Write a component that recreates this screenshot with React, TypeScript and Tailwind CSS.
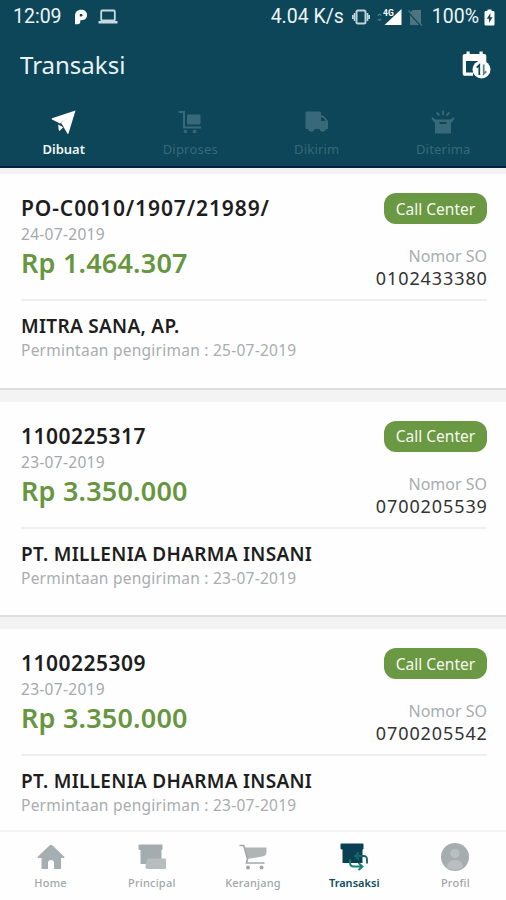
import type { ReactNode } from 'react'

type Order = {
  id: string
  idClass: string
  date: string
  total: string
  so: string
  customer: string
  delivery: string
}

const orders: Order[] = [
  {
    id: 'PO-C0010/1907/21989/',
    idClass: 'tracking-[0.9px]',
    date: '24-07-2019',
    total: 'Rp 1.464.307',
    so: '0102433380',
    customer: 'MITRA SANA, AP.',
    delivery: '25-07-2019',
  },
  {
    id: '1100225317',
    idClass: 'tracking-[0.5px]',
    date: '23-07-2019',
    total: 'Rp 3.350.000',
    so: '0700205539',
    customer: 'PT. MILLENIA DHARMA INSANI',
    delivery: '23-07-2019',
  },
  {
    id: '1100225309',
    idClass: 'tracking-[0.5px]',
    date: '23-07-2019',
    total: 'Rp 3.350.000',
    so: '0700205542',
    customer: 'PT. MILLENIA DHARMA INSANI',
    delivery: '23-07-2019',
  },
]

function StatusBar() {
  return (
    <div className="flex h-8 items-center pt-0.5 pl-[13px] pr-[11px] font-['Roboto',sans-serif] text-[19.5px] leading-8 text-[#eef4f6]">
      <span className="w-[50px] whitespace-nowrap">12:09</span>
      <svg viewBox="0 0 14 16" className="ml-[11px] h-4 w-3.5">
        <path fill="#fff" fillRule="evenodd" d="M1 7C1 3 3.500.8 7 .8c3.800 0 6 2 6 5.200s-2 5.200-5.500 5.200H6.300v1.500c0 1.500-1 2.500-2.500 2.500H1zM5.800 5v2.500h1.500c.9 0 1.300-.5 1.300-1.200S8.200 5 7.300 5z" />
      </svg>
      <svg viewBox="0 0 20 16" className="ml-[10px] h-4 w-5">
        <rect x="3.200" y="1.500" width="13.600" height="10" rx="1" fill="none" stroke="#c9dade" strokeWidth="1.800" />
        <path fill="#c9dade" d="M.5 12h19v2.500H.5z" />
      </svg>
      <span className="ml-auto whitespace-nowrap">4.04 K/s</span>
      <svg viewBox="0 0 18 16" className="ml-2 h-4 w-[18px]" fill="none" stroke="#bfd2d8" strokeWidth="1.600">
        <rect x="4.500" y="1.500" width="9" height="13" rx="1.500" strokeWidth="2" />
        <path d="M2.500 4v8M.8 6v4M15.500 4v8M17.200 6v4" />
      </svg>
      <svg viewBox="0 0 25 18" className="ml-[7px] h-[18px] w-[25px]">
        <path fill="none" stroke="#4f7b89" strokeWidth="1.200" d="M.8 7.500 2.500 6l1.700 1.500M.8 11l1.700 1.500L4.200 11" />
        <path fill="#fff" d="M24.500 1v16h-17z" />
        <text x="6" y="7.500" fontSize="8.500" fontWeight="700" fill="#fff">4G</text>
      </svg>
      <svg viewBox="0 0 15 17" className="ml-[6px] h-[17px] w-[15px]">
        <path fill="#4d7480" d="M5 1h8v14L2 3.500zM2 6l9 10H2z" />
        <path fill="none" stroke="#4d7480" strokeWidth="1.300" d="m.5 1.500 13.500 15" />
      </svg>
      <span className="ml-[9px] whitespace-nowrap">100%</span>
      <svg viewBox="0 0 11 17" className="ml-[5px] h-[17px] w-[11px]">
        <path fill="#fff" d="M3.500.5h4V2H9c1 0 1.500.5 1.500 1.500v11.500c0 1-.5 1.500-1.500 1.500H2C1 16.500.5 16 .5 15V3.500C.5 2.500 1 2 2 2h1.500z" />
        <path fill="#0c4658" d="M6.500 4 2.800 9.700h2.300V14l3.400-5.700H6.200z" />
      </svg>
    </div>
  )
}

function CalendarIcon() {
  return (
    <svg viewBox="0 0 29 28" className="h-7 w-[29px]">
      <path fill="#fff" fillRule="evenodd" d="M4.500.5h3.200V3h9.800V.5h3.200V3H22c1.500 0 2.300.8 2.300 2.300V13h-3.200v-3H4v11.500h7v3.200H3C1.500 24.700.7 24 .7 22.400V5.300C.7 3.800 1.500 3 3 3h1.500z" />
      <circle cx="19.500" cy="18.500" r="9" fill="#fff" />
      <path fill="none" stroke="#0c4658" strokeWidth="1.700" d="M17.300 24V14l-2.600 2.700" />
      <path fill="none" stroke="#5d808b" strokeWidth="1.700" d="M21.700 13.500v9.500l2.600-2.600" />
    </svg>
  )
}

function PlaneIcon() {
  return (
    <svg viewBox="0 0 25 24" className="h-6 w-[25px]">
      <path fill="#fff" d="M24.500.5 17.500 23.500c-.3.600-.8.600-1.200 0L12.500 17 19 6.500 9 13.500 1 9.500c-.6-.4-.6-1 0-1.200z" />
      <path fill="#fff" d="m10 13 9-7.500 1 2-6.500 10.500z" />
      <path fill="#fff" d="m7.200 14.500 5 2.700-3.200 3.300c-.6.500-1.200.3-1.300-.5z" />
    </svg>
  )
}

function TrolleyIcon() {
  return (
    <svg viewBox="0 0 24 24" className="h-6 w-6" fill="#386978">
      <path fill="none" stroke="#386978" strokeWidth="2" d="M.5 2H6v15.500h17" />
      <rect x="9" y="4.500" width="13.500" height="10" rx="1" />
      <circle cx="7.500" cy="21.500" r="1.800" />
      <circle cx="16.500" cy="21.500" r="1.800" />
    </svg>
  )
}

function TruckIcon() {
  return (
    <svg viewBox="0 0 24 24" className="h-6 w-6" fill="#386978">
      <path fillRule="evenodd" d="M2 1.500h12.500c1 0 1.500.5 1.500 1.500v2.500h2.500L23 11v8h-2a3.300 3.300 0 0 1-6.500 0H9.500a3.300 3.300 0 0 1-6.500 0H1.500C.8 19 .5 18.500.5 17.500V3c0-1 .5-1.500 1.500-1.500zm14 6V11h5l-3-3.500z" />
    </svg>
  )
}

function OpenBoxIcon() {
  return (
    <svg viewBox="0 0 24 24" className="h-6 w-6" fill="#386978">
      <path fillRule="evenodd" d="M4.500 9.500h15L22.500 7l1 2-3.500 4v10.500H4V13L.5 9l1-2zM8.500 12v2h7v-2z" />
      <path fill="none" stroke="#386978" strokeWidth="1.800" d="m5.500 2.500 3 3M12 .5V5M18.500 2.500l-3 3" />
    </svg>
  )
}

function HomeIcon() {
  return (
    <svg viewBox="0 0 28 26" className="h-[26px] w-7" fill="#a5afb1">
      <path d="M12.500 1.500c1-1 2-1 3 0L27 12.500c.8.900.5 1.500-.5 1.500H24v11h-7v-6c0-2-1-3-3-3s-3 1-3 3v6H4.500V14H1.500c-1 0-1.200-.6-.5-1.500z" />
    </svg>
  )
}

function StoreIcon() {
  return (
    <svg viewBox="0 0 28 26" className="h-[26px] w-7">
      <path fill="#a3adb0" d="M1.500.5h22c.8 0 1 .5 1 1v3.300c0 .8-.5 1.200-1 1.200v14H2.500V6C1 6 .5 5.500.5 4.500v-3c0-.5.300-1 1-1z" />
      <path fill="#b9bcbc" d="M10 14.500h17c.8 0 1 .5 1 1v8c0 1-.5 1.500-1.500 1.500H9.500c-1.300 0-2-.7-2-2v-1.500l1.500-6c.1-.7.500-1 1-1z" />
    </svg>
  )
}

function CartIcon() {
  return (
    <svg viewBox="0 0 28 26" className="h-[26px] w-7">
      <path fill="#afb4b5" d="M6 3.500h21.500v4c0 3-1.500 4.500-4.500 5L8.500 15z" />
      <path fill="none" stroke="#a3a8a9" strokeWidth="1.700" d="M.5 1.500h4.300L8.500 15l-1 4h18" />
      <circle cx="9" cy="23.500" r="2" fill="#a3a8a9" />
      <circle cx="22.500" cy="23.500" r="2" fill="#a3a8a9" />
    </svg>
  )
}

function TransaksiIcon() {
  return (
    <svg viewBox="0 0 28 28" className="h-7 w-7">
      <path fill="#0b4052" d="M1.500.5h21c.8 0 1 .5 1 1v4c0 .6-.4 1-1 1V20h-20V6.500C1 6.500.5 6 .5 5.500v-4c0-.5.300-1 1-1z" />
      <path fill="none" stroke="#12696f" strokeWidth="1.900" d="M27 20.500v-4c0-2.200-1-3.500-3.500-3.500h-8M19 9.500 15 13l4 3.500" />
      <path fill="none" stroke="#148176" strokeWidth="1.900" d="M10 16.500v3c0 2.500 1.200 4 3.500 4H22M18.500 20l4 3.500-4 3.500" />
    </svg>
  )
}

function ProfilIcon() {
  return (
    <svg viewBox="0 0 28 28" className="h-7 w-7">
      <circle cx="14" cy="14" r="14" fill="#a5adae" />
      <circle cx="14" cy="10.500" r="4.700" fill="#b9bebf" />
      <path fill="#b9bebf" d="M6 24.500c0-5 3-7.500 8-7.500s8 2.500 8 7.500c-4.500 3.200-11.500 3.200-16 0z" />
    </svg>
  )
}

function Tab({ label, icon, active }: { label: string; icon: ReactNode; active?: boolean }) {
  return (
    <div className="flex flex-1 flex-col items-center pl-px">
      {icon}
      <span
        className={
          active
            ? 'mt-[7px] text-[13px] leading-4 font-semibold text-[#f1f6f7]'
            : 'mt-[7px] text-[13px] leading-4 tracking-[0.2px] text-[#386978]'
        }
      >
        {label}
      </span>
    </div>
  )
}

function OrderCard({ order }: { order: Order }) {
  return (
    <div className="h-[215.5px] shrink-0 border-b-2 border-[#dedede] bg-[#fefefe] pl-[21px] pr-[19px]">
      <div className="flex h-[127px] justify-between border-b-2 border-[#efefef] whitespace-nowrap">
        <div className="pt-[20px]">
          <div className={`text-[21px] leading-7 font-semibold text-[#1d1d1d] ${order.idClass}`}>{order.id}</div>
          <div className="text-[15.5px] leading-6 tracking-[0.3px] text-[#a5a9ab]">{order.date}</div>
          <div className="text-[27px] leading-[34px] font-semibold tracking-[0.2px] text-[#679640]">{order.total}</div>
        </div>
        <div className="flex flex-col items-end pt-[19px]">
          <div className="flex h-[31px] w-[103px] items-center justify-center rounded-[12px] bg-[#6b9842] pt-0.5 text-[15.5px] text-[#f5f9ef]">
            Call Center
          </div>
          <div className="mt-[21px] text-[16px] leading-[22px] text-[#a9adaf]">Nomor SO</div>
          <div className="text-[18px] leading-[22px] tracking-[0.9px] text-[#333] -mr-[0.8px]">{order.so}</div>
        </div>
      </div>
      <div className="pt-3 text-[19px] leading-[26px] font-semibold tracking-[0.3px] whitespace-nowrap text-[#1d1d1d]">
        {order.customer}
      </div>
      <div className="text-[15.5px] leading-[22px] tracking-[0.25px] text-[#a9adaf]">
        Permintaan pengiriman : {order.delivery}
      </div>
    </div>
  )
}

function NavItem({ label, icon, active }: { label: string; icon: ReactNode; active?: boolean }) {
  return (
    <div className="flex flex-1 flex-col items-center">
      <div className="flex h-7 items-center">{icon}</div>
      <span
        className={
          active
            ? 'mt-[5px] text-[11px] leading-[14px] font-semibold text-[#0f4c5c]'
            : 'mt-[5px] text-[11px] leading-[14px] font-medium tracking-[0.2px] text-[#a2a7a9]'
        }
      >
        {label}
      </span>
    </div>
  )
}

export default function App() {
  return (
    <div className="flex h-[900px] w-[506px] flex-col overflow-hidden bg-[#f3f3f3] font-['Noto_Sans',sans-serif]">
      <header className="h-[168px] shrink-0 border-b-2 border-[#071f42] bg-[#0c4658]">
        <StatusBar />
        <div className="flex h-[66px] items-center justify-between pl-5 pr-[15px]">
          <h1 className="text-[24px] leading-8 text-[#e9f2f5]">Transaksi</h1>
          <CalendarIcon />
        </div>
        <div className="flex pt-3">
          <Tab label="Dibuat" icon={<PlaneIcon />} active />
          <Tab label="Diproses" icon={<TrolleyIcon />} />
          <Tab label="Dikirim" icon={<TruckIcon />} />
          <Tab label="Diterima" icon={<OpenBoxIcon />} />
        </div>
      </header>

      <main className="flex min-h-0 flex-1 flex-col gap-3 overflow-hidden pt-[6px]">
        {orders.map((order) => (
          <OrderCard key={order.id} order={order} />
        ))}
      </main>

      <nav className="flex h-[70px] shrink-0 border-t-2 border-[#f5f5f5] bg-[#fefefe] pt-[11px]">
        <NavItem label="Home" icon={<HomeIcon />} />
        <NavItem label="Principal" icon={<StoreIcon />} />
        <NavItem label="Keranjang" icon={<CartIcon />} />
        <NavItem label="Transaksi" icon={<TransaksiIcon />} active />
        <NavItem label="Profil" icon={<ProfilIcon />} />
      </nav>
    </div>
  )
}
